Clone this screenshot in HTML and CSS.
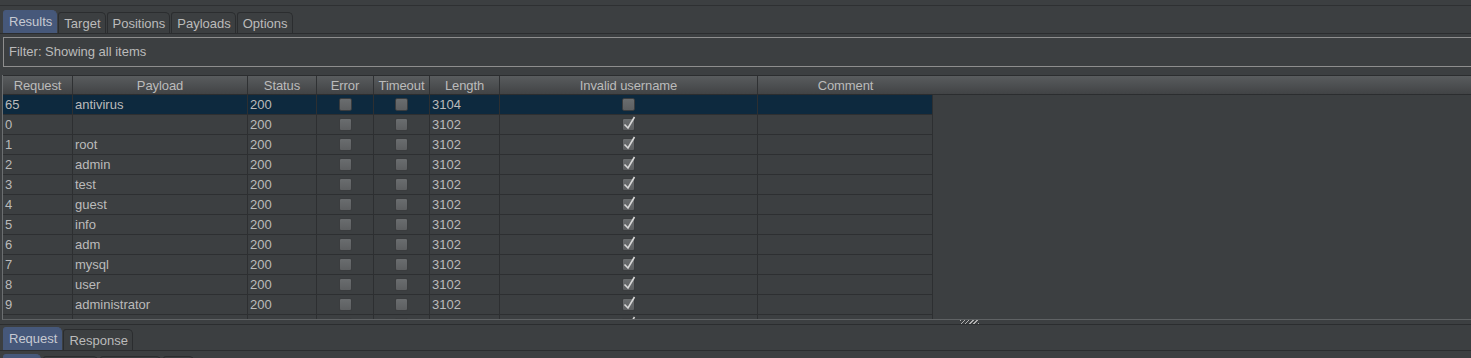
FILE: index.html
```html
<!DOCTYPE html>
<html lang="en">
<head>
  <meta charset="UTF-8" />
  <title>Intruder attack</title>
  <link rel="stylesheet" href="styles.css">
</head>
<body>
  <div class="top-rule"></div>

  <div class="tabs main-tabs">
    <div class="tab active">Results</div>
    <div class="tab">Target</div>
    <div class="tab">Positions</div>
    <div class="tab">Payloads</div>
    <div class="tab">Options</div>
  </div>

  <div class="filter">Filter: Showing all items</div>

  <div class="results">
    <div class="head">
      <div>Request</div>
      <div>Payload</div>
      <div>Status</div>
      <div>Error</div>
      <div>Timeout</div>
      <div>Length</div>
      <div>Invalid username</div>
      <div class="last">Comment</div>
      <div class="last"></div>
    </div>

    <div class="rows">
      <div class="row selected">
        <div>65</div><div>antivirus</div><div>200</div>
        <div class="check"><span class="box"></span></div>
        <div class="check"><span class="box"></span></div>
        <div>3104</div>
        <div class="check"><span class="box"></span></div>
        <div></div>
      </div>
      <div class="row">
        <div>0</div><div></div><div>200</div>
        <div class="check"><span class="box"></span></div>
        <div class="check"><span class="box"></span></div>
        <div>3102</div>
        <div class="check"><span class="box"><svg viewBox="0 0 11 11"><path d="M1.5 5.5L5 9L11.5 -2"/></svg></span></div>
        <div></div>
      </div>
      <div class="row">
        <div>1</div><div>root</div><div>200</div>
        <div class="check"><span class="box"></span></div>
        <div class="check"><span class="box"></span></div>
        <div>3102</div>
        <div class="check"><span class="box"><svg viewBox="0 0 11 11"><path d="M1.5 5.5L5 9L11.5 -2"/></svg></span></div>
        <div></div>
      </div>
      <div class="row">
        <div>2</div><div>admin</div><div>200</div>
        <div class="check"><span class="box"></span></div>
        <div class="check"><span class="box"></span></div>
        <div>3102</div>
        <div class="check"><span class="box"><svg viewBox="0 0 11 11"><path d="M1.5 5.5L5 9L11.5 -2"/></svg></span></div>
        <div></div>
      </div>
      <div class="row">
        <div>3</div><div>test</div><div>200</div>
        <div class="check"><span class="box"></span></div>
        <div class="check"><span class="box"></span></div>
        <div>3102</div>
        <div class="check"><span class="box"><svg viewBox="0 0 11 11"><path d="M1.5 5.5L5 9L11.5 -2"/></svg></span></div>
        <div></div>
      </div>
      <div class="row">
        <div>4</div><div>guest</div><div>200</div>
        <div class="check"><span class="box"></span></div>
        <div class="check"><span class="box"></span></div>
        <div>3102</div>
        <div class="check"><span class="box"><svg viewBox="0 0 11 11"><path d="M1.5 5.5L5 9L11.5 -2"/></svg></span></div>
        <div></div>
      </div>
      <div class="row">
        <div>5</div><div>info</div><div>200</div>
        <div class="check"><span class="box"></span></div>
        <div class="check"><span class="box"></span></div>
        <div>3102</div>
        <div class="check"><span class="box"><svg viewBox="0 0 11 11"><path d="M1.5 5.5L5 9L11.5 -2"/></svg></span></div>
        <div></div>
      </div>
      <div class="row">
        <div>6</div><div>adm</div><div>200</div>
        <div class="check"><span class="box"></span></div>
        <div class="check"><span class="box"></span></div>
        <div>3102</div>
        <div class="check"><span class="box"><svg viewBox="0 0 11 11"><path d="M1.5 5.5L5 9L11.5 -2"/></svg></span></div>
        <div></div>
      </div>
      <div class="row">
        <div>7</div><div>mysql</div><div>200</div>
        <div class="check"><span class="box"></span></div>
        <div class="check"><span class="box"></span></div>
        <div>3102</div>
        <div class="check"><span class="box"><svg viewBox="0 0 11 11"><path d="M1.5 5.5L5 9L11.5 -2"/></svg></span></div>
        <div></div>
      </div>
      <div class="row">
        <div>8</div><div>user</div><div>200</div>
        <div class="check"><span class="box"></span></div>
        <div class="check"><span class="box"></span></div>
        <div>3102</div>
        <div class="check"><span class="box"><svg viewBox="0 0 11 11"><path d="M1.5 5.5L5 9L11.5 -2"/></svg></span></div>
        <div></div>
      </div>
      <div class="row">
        <div>9</div><div>administrator</div><div>200</div>
        <div class="check"><span class="box"></span></div>
        <div class="check"><span class="box"></span></div>
        <div>3102</div>
        <div class="check"><span class="box"><svg viewBox="0 0 11 11"><path d="M1.5 5.5L5 9L11.5 -2"/></svg></span></div>
        <div></div>
      </div>
      <!-- next row, only its top edge shows -->
      <div class="row">
        <div></div><div></div><div></div>
        <div class="check"><span class="box"></span></div>
        <div class="check"><span class="box"></span></div>
        <div></div>
        <div class="check"><span class="box"><svg viewBox="0 0 11 11"><path d="M1.5 5.5L5 9L11.5 -2"/></svg></span></div>
        <div></div>
      </div>
    </div>
  </div>

  <div class="splitter"><span class="grip"></span></div>

  <div class="tabs lower-tabs">
    <div class="tab active">Request</div>
    <div class="tab">Response</div>
  </div>

  <div class="tabs sub-tabs">
    <div class="tab active sub-raw"></div>
    <div class="tab sub-params"></div>
    <div class="tab sub-headers"></div>
    <div class="tab sub-hex"></div>
  </div>
</body>
</html>
```

FILE: styles.css
```css
body {
  margin: 0;
  height: 358px;
  overflow: hidden;
  background-color: #3c3f41;
  color: #bbbbbb;
  font-family: 'Liberation Sans', Arial, sans-serif;
  font-size: 13px;
}

.top-rule {
  height: 5px;
  border-bottom: 1px solid #2e3032;
}

/* tab strips */
.tabs {
  display: flex;
  align-items: flex-end;
  gap: 1px;
  padding-left: 3px;
  border-bottom: 1px solid #2b2d2f;
}

.main-tabs {
  padding-top: 4px;
}

.lower-tabs {
  padding-top: 2px;
}

.sub-tabs {
  margin-top: 3px;
  gap: 2px;
  border-bottom: none;
}

.tab {
  box-sizing: border-box;
  height: 21px;
  padding: 2px 4px 0 5px;
  line-height: 18px;
  border: 1px solid #2b2d2f;
  border-bottom: none;
  border-radius: 3px 5px 0 0;
  white-space: nowrap;
}

.tab.active {
  height: 23px;
  background-color: #46587a;
  border-color: #46587a;
  color: #c6cad2;
}

.sub-raw { width: 38px; }
.sub-params { width: 55px; }
.sub-headers { width: 61px; }
.sub-hex { width: 31px; }

.filter {
  margin: 3px -2px 8px 3px;
  height: 28px;
  line-height: 28px;
  padding-left: 5px;
  border: 1px solid #8e8e8e;
}

/* results table */
.results {
  margin-left: 2px;
  border-left: 1px solid #6b6e70;
  border-bottom: 1px solid #5f6264;
}

.head {
  display: grid;
  grid-template-columns: 70px 175px 69px 57px 56px 70px 258px 175px 1fr;
  height: 18px;
  line-height: 19px;
  border-top: 1px solid #2b2d2f;
  border-bottom: 1px solid #2b2d2f;
  background: linear-gradient(#595c5e, #414345);
  text-align: center;
  letter-spacing: -0.1px;
}

.head > div {
  box-sizing: border-box;
  border-right: 1px solid #2f3133;
  white-space: nowrap;
  overflow: hidden;
}

.head > .last {
  border-right: none;
}

.rows {
  height: 224px;
  overflow: hidden;
}

.row {
  display: grid;
  grid-template-columns: 70px 175px 69px 57px 56px 70px 258px 175px;
  height: 20px;
}

.row > div {
  box-sizing: border-box;
  padding-left: 2px;
  line-height: 19px;
  border-right: 1px solid #2d2f31;
  border-bottom: 1px solid #2d2f31;
  white-space: nowrap;
  overflow: hidden;
}

.row.selected > div {
  background-color: #0d293e;
}

.row > .check {
  display: flex;
  justify-content: center;
  align-items: center;
  padding: 0;
  overflow: visible;
}

.box {
  position: relative;
  box-sizing: border-box;
  width: 13px;
  height: 13px;
  border: 1px solid #3a3c3e;
  border-radius: 2px;
  background: linear-gradient(#6a6d6f, #5d5f61);
}

.box svg {
  position: absolute;
  left: 0;
  top: 0;
  width: 11px;
  height: 11px;
  overflow: visible;
}

.box path {
  fill: none;
  stroke: #d6d6d6;
  stroke-width: 1.6;
}

.splitter {
  height: 4px;
  border-bottom: 1px solid #2b2d2f;
}

.grip {
  display: block;
  width: 19px;
  height: 4px;
  margin-left: 960px;
  background: repeating-linear-gradient(135deg, #b0b0b0 0 1px, #3c3f41 1px 3px);
}
```
